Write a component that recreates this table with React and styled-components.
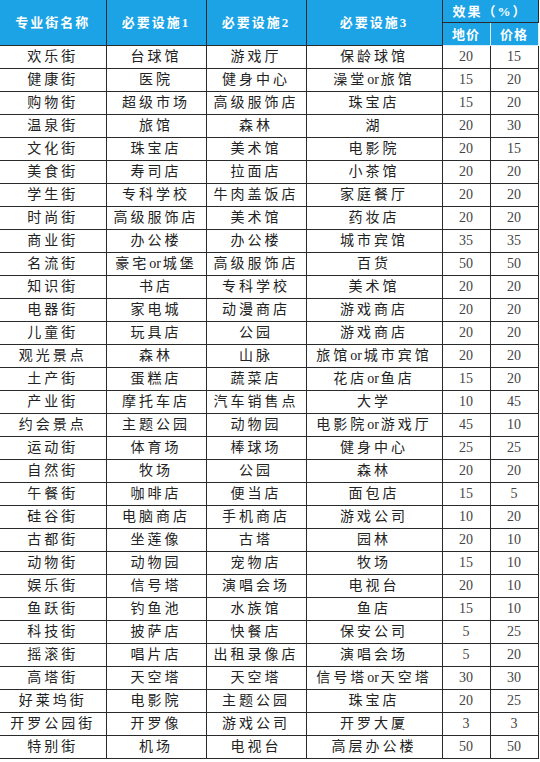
import React from "react";
import styled, { createGlobalStyle } from "styled-components";

const Global = createGlobalStyle`
  html, body {
    margin: 0;
    padding: 0;
    background: #fff;
  }
`;

const rows = [
  ["欢乐街", "台球馆", "游戏厅", "保龄球馆", 20, 15],
  ["健康街", "医院", "健身中心", "澡堂or旅馆", 15, 20],
  ["购物街", "超级市场", "高级服饰店", "珠宝店", 15, 20],
  ["温泉街", "旅馆", "森林", "湖", 20, 30],
  ["文化街", "珠宝店", "美术馆", "电影院", 20, 15],
  ["美食街", "寿司店", "拉面店", "小茶馆", 20, 20],
  ["学生街", "专科学校", "牛肉盖饭店", "家庭餐厅", 20, 20],
  ["时尚街", "高级服饰店", "美术馆", "药妆店", 20, 20],
  ["商业街", "办公楼", "办公楼", "城市宾馆", 35, 35],
  ["名流街", "豪宅or城堡", "高级服饰店", "百货", 50, 50],
  ["知识街", "书店", "专科学校", "美术馆", 20, 20],
  ["电器街", "家电城", "动漫商店", "游戏商店", 20, 20],
  ["儿童街", "玩具店", "公园", "游戏商店", 20, 20],
  ["观光景点", "森林", "山脉", "旅馆or城市宾馆", 20, 20],
  ["土产街", "蛋糕店", "蔬菜店", "花店or鱼店", 15, 20],
  ["产业街", "摩托车店", "汽车销售点", "大学", 10, 45],
  ["约会景点", "主题公园", "动物园", "电影院or游戏厅", 45, 10],
  ["运动街", "体育场", "棒球场", "健身中心", 25, 25],
  ["自然街", "牧场", "公园", "森林", 20, 20],
  ["午餐街", "咖啡店", "便当店", "面包店", 15, 5],
  ["硅谷街", "电脑商店", "手机商店", "游戏公司", 10, 20],
  ["古都街", "坐莲像", "古塔", "园林", 20, 10],
  ["动物街", "动物园", "宠物店", "牧场", 15, 10],
  ["娱乐街", "信号塔", "演唱会场", "电视台", 20, 10],
  ["鱼跃街", "钓鱼池", "水族馆", "鱼店", 15, 10],
  ["科技街", "披萨店", "快餐店", "保安公司", 5, 25],
  ["摇滚街", "唱片店", "出租录像店", "演唱会场", 5, 20],
  ["高塔街", "天空塔", "天空塔", "信号塔or天空塔", 30, 30],
  ["好莱坞街", "电影院", "主题公园", "珠宝店", 20, 25],
  ["开罗公园街", "开罗像", "游戏公司", "开罗大厦", 3, 3],
  ["特别街", "机场", "电视台", "高层办公楼", 50, 50],
];

const Table = styled.table`
  width: 538px;
  border-collapse: collapse;
  table-layout: fixed;
  font-family: "Liberation Serif", "Noto Sans CJK SC", serif;
`;

const Th = styled.th`
  background: #1ba3e6;
  color: #fff;
  font-size: 13px;
  font-weight: bold;
  letter-spacing: ${(p) => (p.$spaced ? "2px" : "1px")};
  height: ${(p) => (p.$half ? "22px" : "45px")};
  line-height: 1;
  padding: 0;
  border: 1px solid ${(p) => (p.$light ? "#d8eefa" : "#2a2a2a")};
  border-top: none;
  &:first-child {
    border-left: none;
  }
`;

const Td = styled.td`
  height: 22px;
  padding: 0;
  line-height: 1;
  text-align: center;
  font-size: 14px;
  letter-spacing: ${(p) => (p.$num ? "0" : "3px")};
  color: ${(p) => (p.$num ? "#444" : "#222")};
  border: 1px solid #2a2a2a;
  white-space: nowrap;
  overflow: hidden;
  &:first-child {
    border-left: none;
  }
`;

const Latin = styled.span`
  letter-spacing: 0;
  margin-right: 2px;
`;

// "or" 之类的英文部分不加字距
const Cell = ({ text }) => {
  const parts = String(text).split("or");
  if (parts.length === 1) return <>{text}</>;
  return (
    <>
      {parts[0]}
      <Latin>or</Latin>
      {parts[1]}
    </>
  );
};

export default function App() {
  return (
    <>
      <Global />
      <Table>
        <colgroup>
          <col style={{ width: 106 }} />
          <col style={{ width: 100 }} />
          <col style={{ width: 100 }} />
          <col style={{ width: 136 }} />
          <col style={{ width: 48 }} />
          <col style={{ width: 48 }} />
        </colgroup>
        <thead>
          <tr>
            <Th rowSpan={2} $spaced>专业街名称</Th>
            <Th rowSpan={2} $spaced>必要设施1</Th>
            <Th rowSpan={2} $spaced>必要设施2</Th>
            <Th rowSpan={2} $spaced>必要设施3</Th>
            <Th colSpan={2} $half $spaced>效果（%）</Th>
          </tr>
          <tr>
            <Th $half $light>地价</Th>
            <Th $half $light>价格</Th>
          </tr>
        </thead>
        <tbody>
          {rows.map((r) => (
            <tr key={r[0]}>
              <Td>{r[0]}</Td>
              <Td><Cell text={r[1]} /></Td>
              <Td>{r[2]}</Td>
              <Td><Cell text={r[3]} /></Td>
              <Td $num>{r[4]}</Td>
              <Td $num>{r[5]}</Td>
            </tr>
          ))}
        </tbody>
      </Table>
    </>
  );
}
